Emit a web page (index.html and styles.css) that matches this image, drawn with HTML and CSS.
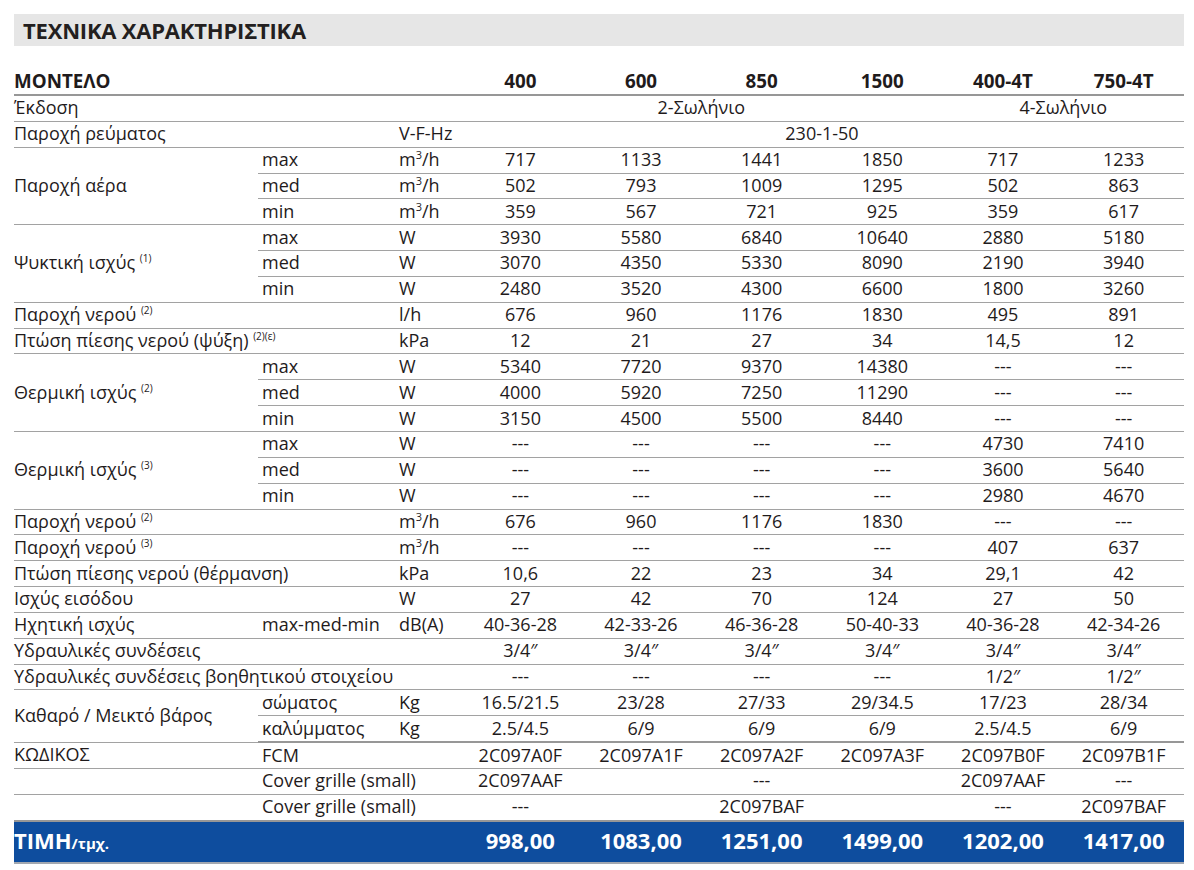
FILE: index.html
```html
<!DOCTYPE html>
<html lang="el">
<head>
<meta charset="utf-8">
<link rel="stylesheet" href="styles.css">
</head>
<body>
<div class="page">
  <div class="title">ΤΕΧΝΙΚΑ ΧΑΡΑΚΤΗΡΙΣΤΙΚΑ</div>
  <table class="spec">
    <colgroup>
      <col class="c-label"><col class="c-sub"><col class="c-unit">
      <col class="c-val"><col class="c-val"><col class="c-val"><col class="c-val"><col class="c-val"><col class="c-val">
    </colgroup>
    <thead>
      <tr class="head">
        <th class="lbl" colspan="3">ΜΟΝΤΕΛΟ</th>
        <th>400</th><th>600</th><th>850</th><th>1500</th><th>400-4T</th><th>750-4T</th>
      </tr>
    </thead>
    <tbody>
      <tr><td class="lbl" colspan="3">Έκδοση</td><td class="v" colspan="4">2-Σωλήνιο</td><td class="v" colspan="2">4-Σωλήνιο</td></tr>
      <tr><td class="lbl" colspan="2">Παροχή ρεύματος</td><td class="u">V-F-Hz</td><td class="v" colspan="6">230-1-50</td></tr>

      <tr><td class="lbl" rowspan="3">Παροχή αέρα</td><td class="s">max</td><td class="u">m<sup class="p">3</sup>/h</td><td class="v">717</td><td class="v">1133</td><td class="v">1441</td><td class="v">1850</td><td class="v">717</td><td class="v">1233</td></tr>
      <tr><td class="s">med</td><td class="u">m<sup class="p">3</sup>/h</td><td class="v">502</td><td class="v">793</td><td class="v">1009</td><td class="v">1295</td><td class="v">502</td><td class="v">863</td></tr>
      <tr><td class="s">min</td><td class="u">m<sup class="p">3</sup>/h</td><td class="v">359</td><td class="v">567</td><td class="v">721</td><td class="v">925</td><td class="v">359</td><td class="v">617</td></tr>

      <tr><td class="lbl" rowspan="3">Ψυκτική ισχύς <sup>(1)</sup></td><td class="s">max</td><td class="u">W</td><td class="v">3930</td><td class="v">5580</td><td class="v">6840</td><td class="v">10640</td><td class="v">2880</td><td class="v">5180</td></tr>
      <tr><td class="s">med</td><td class="u">W</td><td class="v">3070</td><td class="v">4350</td><td class="v">5330</td><td class="v">8090</td><td class="v">2190</td><td class="v">3940</td></tr>
      <tr><td class="s">min</td><td class="u">W</td><td class="v">2480</td><td class="v">3520</td><td class="v">4300</td><td class="v">6600</td><td class="v">1800</td><td class="v">3260</td></tr>

      <tr><td class="lbl" colspan="2">Παροχή νερού <sup>(2)</sup></td><td class="u">l/h</td><td class="v">676</td><td class="v">960</td><td class="v">1176</td><td class="v">1830</td><td class="v">495</td><td class="v">891</td></tr>
      <tr><td class="lbl" colspan="2">Πτώση πίεσης νερού (ψύξη) <sup>(2)(ε)</sup></td><td class="u">kPa</td><td class="v">12</td><td class="v">21</td><td class="v">27</td><td class="v">34</td><td class="v">14,5</td><td class="v">12</td></tr>

      <tr><td class="lbl" rowspan="3">Θερμική ισχύς <sup>(2)</sup></td><td class="s">max</td><td class="u">W</td><td class="v">5340</td><td class="v">7720</td><td class="v">9370</td><td class="v">14380</td><td class="v">---</td><td class="v">---</td></tr>
      <tr><td class="s">med</td><td class="u">W</td><td class="v">4000</td><td class="v">5920</td><td class="v">7250</td><td class="v">11290</td><td class="v">---</td><td class="v">---</td></tr>
      <tr><td class="s">min</td><td class="u">W</td><td class="v">3150</td><td class="v">4500</td><td class="v">5500</td><td class="v">8440</td><td class="v">---</td><td class="v">---</td></tr>

      <tr><td class="lbl" rowspan="3">Θερμική ισχύς <sup>(3)</sup></td><td class="s">max</td><td class="u">W</td><td class="v">---</td><td class="v">---</td><td class="v">---</td><td class="v">---</td><td class="v">4730</td><td class="v">7410</td></tr>
      <tr><td class="s">med</td><td class="u">W</td><td class="v">---</td><td class="v">---</td><td class="v">---</td><td class="v">---</td><td class="v">3600</td><td class="v">5640</td></tr>
      <tr><td class="s">min</td><td class="u">W</td><td class="v">---</td><td class="v">---</td><td class="v">---</td><td class="v">---</td><td class="v">2980</td><td class="v">4670</td></tr>

      <tr><td class="lbl" colspan="2">Παροχή νερού <sup>(2)</sup></td><td class="u">m<sup class="p">3</sup>/h</td><td class="v">676</td><td class="v">960</td><td class="v">1176</td><td class="v">1830</td><td class="v">---</td><td class="v">---</td></tr>
      <tr><td class="lbl" colspan="2">Παροχή νερού <sup>(3)</sup></td><td class="u">m<sup class="p">3</sup>/h</td><td class="v">---</td><td class="v">---</td><td class="v">---</td><td class="v">---</td><td class="v">407</td><td class="v">637</td></tr>
      <tr><td class="lbl" colspan="2">Πτώση πίεσης νερού (θέρμανση)</td><td class="u">kPa</td><td class="v">10,6</td><td class="v">22</td><td class="v">23</td><td class="v">34</td><td class="v">29,1</td><td class="v">42</td></tr>
      <tr><td class="lbl" colspan="2">Ισχύς εισόδου</td><td class="u">W</td><td class="v">27</td><td class="v">42</td><td class="v">70</td><td class="v">124</td><td class="v">27</td><td class="v">50</td></tr>
      <tr><td class="lbl">Ηχητική ισχύς</td><td class="s">max-med-min</td><td class="u">dB(A)</td><td class="v">40-36-28</td><td class="v">42-33-26</td><td class="v">46-36-28</td><td class="v">50-40-33</td><td class="v">40-36-28</td><td class="v">42-34-26</td></tr>
      <tr><td class="lbl" colspan="3">Υδραυλικές συνδέσεις</td><td class="v">3/4″</td><td class="v">3/4″</td><td class="v">3/4″</td><td class="v">3/4″</td><td class="v">3/4″</td><td class="v">3/4″</td></tr>
      <tr><td class="lbl" colspan="3">Υδραυλικές συνδέσεις βοηθητικού στοιχείου</td><td class="v">---</td><td class="v">---</td><td class="v">---</td><td class="v">---</td><td class="v">1/2″</td><td class="v">1/2″</td></tr>

      <tr><td class="lbl" rowspan="2">Καθαρό / Μεικτό βάρος</td><td class="s">σώματος</td><td class="u">Kg</td><td class="v">16.5/21.5</td><td class="v">23/28</td><td class="v">27/33</td><td class="v">29/34.5</td><td class="v">17/23</td><td class="v">28/34</td></tr>
      <tr class="sep-after"><td class="s">καλύμματος</td><td class="u">Kg</td><td class="v">2.5/4.5</td><td class="v">6/9</td><td class="v">6/9</td><td class="v">6/9</td><td class="v">2.5/4.5</td><td class="v">6/9</td></tr>

      <tr><td class="lbl">ΚΩΔΙΚΟΣ</td><td class="s" colspan="2">FCM</td><td class="v">2C097A0F</td><td class="v">2C097A1F</td><td class="v">2C097A2F</td><td class="v">2C097A3F</td><td class="v">2C097B0F</td><td class="v">2C097B1F</td></tr>
      <tr><td class="lbl"></td><td class="s" colspan="2">Cover grille (small)</td><td class="v">2C097AAF</td><td class="v"></td><td class="v">---</td><td class="v"></td><td class="v">2C097AAF</td><td class="v">---</td></tr>
      <tr class="last"><td class="lbl"></td><td class="s" colspan="2">Cover grille (small)</td><td class="v">---</td><td class="v"></td><td class="v">2C097BAF</td><td class="v"></td><td class="v">---</td><td class="v">2C097BAF</td></tr>
    </tbody>
    <tfoot>
      <tr class="price">
        <td class="lbl" colspan="3">ΤΙΜΗ<span class="per">/τμχ.</span></td>
        <td>998,00</td><td>1083,00</td><td>1251,00</td><td>1499,00</td><td>1202,00</td><td>1417,00</td>
      </tr>
    </tfoot>
  </table>
</div>
</body>
</html>
```

FILE: styles.css
```css
html, body {
  margin: 0;
  padding: 0;
  background: #ffffff;
}
body {
  font-family: "Open Sans", "Noto Sans", sans-serif;
  color: #1f1b1c;
}
.page {
  padding: 14px 10px 0 14px;
  width: 1170px;
}
.title {
  background: #e6e6e6;
  height: 32px;
  line-height: 33px;
  padding-left: 9px;
  font-size: 22px;
  font-weight: 700;
  letter-spacing: -0.2px;
  color: #231f20;
}
.spec {
  margin-top: 22px;
  width: 1170px;
  border-collapse: collapse;
  table-layout: fixed;
  font-size: 18px;
}
.c-label { width: 244px; }
.c-sub { width: 137px; }
.c-unit { width: 65px; }
.c-val { width: 120.66px; }

.spec th, .spec td {
  padding: 0;
  white-space: nowrap;
  overflow: visible;
  vertical-align: middle;
}
.spec tbody td {
  height: 22.85px;
  padding-bottom: 2px;
  border-bottom: 1px solid #a2a2a2;
  line-height: 18px;
}
.head th {
  height: 23px;
  font-size: 18.8px;
  font-weight: 700;
  text-align: center;
  border-bottom: 2px solid #979797;
}
.head th.lbl { text-align: left; }
.lbl { text-align: left; }
.s { padding-left: 4px !important; text-align: left; }
.u { padding-left: 4px !important; text-align: left; }
.v { text-align: center; }
sup {
  font-size: 10px;
  vertical-align: 7px;
  line-height: 0;
}
sup.p { font-size: 11px; vertical-align: 7px; }
.sep-after td { border-bottom: 2px solid #979797 !important; }
.last td { border-bottom: 2px solid #979797 !important; }
.price td {
  background: #0e4d9e;
  color: #ffffff;
  font-weight: 700;
  font-size: 22px;
  height: 37px;
  padding: 0 0 3px 0;
  text-align: center;
  border-bottom: 2px solid #a3a8b0;
}
.price td.lbl { text-align: left; }
.price .per { font-size: 15px; }
```
